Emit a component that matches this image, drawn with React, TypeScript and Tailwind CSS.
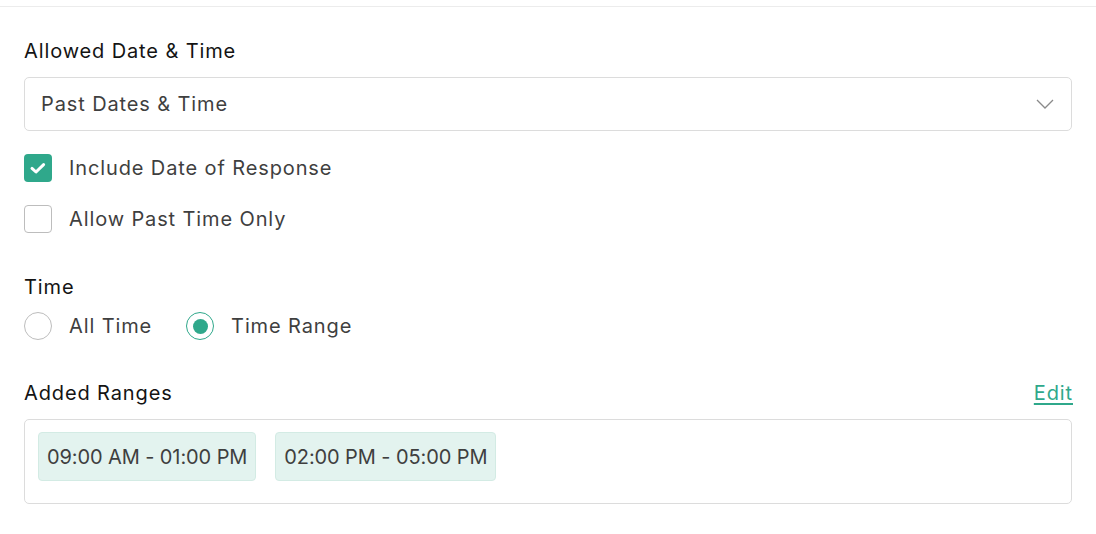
import React from "react";

function Checkbox({ checked, label }: { checked: boolean; label: string }) {
  return (
    <div className="flex items-center gap-[17px]">
      {checked ? (
        <div className="w-[28px] h-[28px] rounded-[4px] bg-[#2fa88b] flex items-center justify-center">
          <svg width="28" height="28" viewBox="0 0 28 28" fill="none">
            <path d="M8 14.4 L12 18 L19.6 10.6" stroke="white" strokeWidth="3" strokeLinecap="round" strokeLinejoin="round" />
          </svg>
        </div>
      ) : (
        <div className="w-[28px] h-[28px] rounded-[4px] border border-[#bdbdbd] bg-white" />
      )}
      <span className="text-[20px] leading-[28px] tracking-[0.88px] text-[#3f3f3f]">{label}</span>
    </div>
  );
}

function Radio({ checked, label }: { checked: boolean; label: string }) {
  return (
    <div className="flex items-center gap-[17px]">
      {checked ? (
        <div className="w-[28px] h-[28px] rounded-full border border-[#2fa88b] flex items-center justify-center bg-white">
          <div className="w-[15px] h-[15px] rounded-full bg-[#2fa88b]" />
        </div>
      ) : (
        <div className="w-[28px] h-[28px] rounded-full border border-[#bdbdbd] bg-white" />
      )}
      <span className="text-[20px] leading-[28px] tracking-[0.88px] text-[#3f3f3f]">{label}</span>
    </div>
  );
}

function Chip({ text }: { text: string }) {
  return (
    <div className="h-[49px] flex items-center pl-[8px] pr-[8px] rounded-[4px] bg-[#e3f3ef] border border-[#d3ebe4] text-[20px] tracking-[-0.1px] text-[#3f3f3f]">
      {text}
    </div>
  );
}

export default function App() {
  return (
    <div
      className="w-[1096px] h-[534px] bg-white overflow-hidden"
      style={{ fontFamily: "Inter, 'Noto Sans', sans-serif" }}
    >
      <div className="h-[6px]" />
      <div className="border-t border-[#ececec]" />
      <div className="px-[24px] pt-[30px] flex flex-col">
        <div className="text-[20px] leading-[28px] tracking-[0.88px] text-[#141414]">Allowed Date &amp; Time</div>
        <div className="mt-[12px] h-[54px] rounded-[5px] border border-[#dcdcdc] flex items-center justify-between pl-[16px] pr-[16px]">
          <span className="text-[20px] leading-[28px] tracking-[0.88px] text-[#3f3f3f]">Past Dates &amp; Time</span>
          <svg width="18" height="10" viewBox="0 0 18 10" fill="none" className="mr-[1px]">
            <path d="M1 1 L9 9 L17 1" stroke="#8a8a8a" strokeWidth="1.3" />
          </svg>
        </div>
        <div className="mt-[23px] flex flex-col gap-[23px]">
          <Checkbox checked label="Include Date of Response" />
          <Checkbox checked={false} label="Allow Past Time Only" />
        </div>
        <div className="mt-[40px] text-[20px] leading-[28px] tracking-[0.88px] text-[#141414]">Time</div>
        <div className="mt-[11px] flex items-center gap-[34px]">
          <Radio checked={false} label="All Time" />
          <Radio checked label="Time Range" />
        </div>
        <div className="mt-[39px] flex items-center justify-between">
          <span className="text-[20px] leading-[28px] tracking-[0.88px] text-[#141414]">Added Ranges</span>
          <a className="text-[20px] leading-[28px] tracking-[0.88px] text-[#2fa88b] underline underline-offset-[3px] decoration-[2px] -mr-[1px]">Edit</a>
        </div>
        <div className="mt-[12px] rounded-[5px] border border-[#dcdcdc] pl-[13px] pt-[12px] pb-[22px] flex gap-[19px]">
          <Chip text="09:00 AM - 01:00 PM" />
          <Chip text="02:00 PM - 05:00 PM" />
        </div>
      </div>
    </div>
  );
}
